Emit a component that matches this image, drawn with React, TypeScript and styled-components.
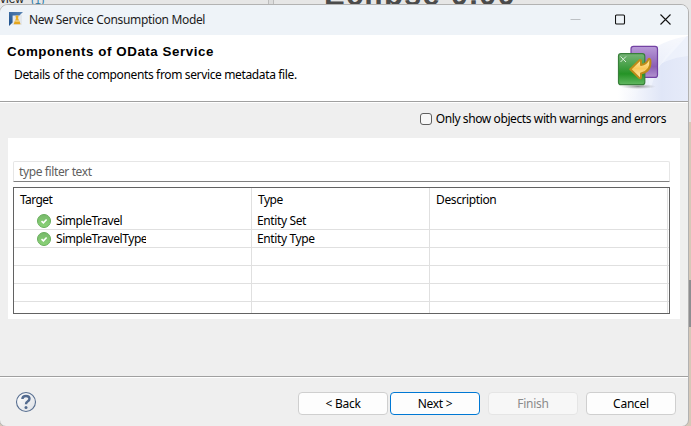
import React from 'react';
import styled, { createGlobalStyle } from 'styled-components';

const Global = createGlobalStyle`
  * { box-sizing: border-box; }
  body { margin: 0; overflow: hidden; font: 12px/16px "Noto Sans", "Open Sans", sans-serif; color: #000; }
`;

const Desktop = styled.div`
  position: relative;
  width: 691px;
  height: 426px;
  padding-top: 4px;
  overflow: hidden;
  background: linear-gradient(#e6e6e6 0 122px, #d6c8b8 122px 280px, #8e8e90 280px 327px, #d6c8b8 327px);
`;

const Behind = styled.div<{ $x: number; $y: number; $size: number; $color: string; $bold?: boolean; $ls?: number }>`
  position: absolute;
  left: ${p => p.$x}px;
  top: ${p => p.$y}px;
  font: ${p => (p.$bold ? 'bold' : 'normal')} ${p => p.$size}px/1 "Liberation Sans", sans-serif;
  letter-spacing: ${p => p.$ls ?? 0}px;
  white-space: pre;
  color: ${p => p.$color};
`;

const Sash = styled.div`
  position: absolute;
  left: 268px;
  top: 0;
  width: 6px;
  height: 5px;
  background: #ddd;
  border: solid #bdbdbd;
  border-width: 0 1px;
`;

const Dialog = styled.section`
  position: relative;
  display: flex;
  flex-direction: column;
  width: 690px;
  height: 423px;
  margin-left: -1px;
  border: 1px solid #b2b2b2;
  border-radius: 9px 8px 7px 7px;
  background: #efefef;
  overflow: hidden;
`;

const Text = styled.span<{ $ls?: number; $color?: string }>`
  white-space: pre;
  letter-spacing: ${p => p.$ls ?? -0.38}px;
  color: ${p => p.$color ?? 'inherit'};
`;

const TitleBar = styled.header`
  display: flex;
  align-items: center;
  flex: 0 0 30px;
  padding: 0 0 2px 9px;
  background: #eef3f8;
`;

const Caption = styled(Text)`
  flex: 1;
  margin: 1px 0 0 6px;
`;

const WindowControls = styled.div`
  display: flex;
  gap: 34px;
  margin-right: 17px;
  svg { display: block; }
`;

const Banner = styled.div`
  display: flex;
  justify-content: space-between;
  flex: 0 0 67px;
  background: #fff;
  border-bottom: 1px solid #a0a0a0;
  box-shadow: 0 1px #fff;
`;

const BannerCopy = styled.div`
  display: flex;
  flex-direction: column;
  padding: 9px 0 0 7px;
`;

const Heading = styled.h1`
  margin: 0;
  font: bold 13.33px/16px "Liberation Sans", Arial, sans-serif;
  letter-spacing: 0.56px;
  white-space: pre;
`;

const Details = styled(Text)`
  margin: 7px 0 0 7px;
`;

const OptionRow = styled.label`
  display: flex;
  align-items: center;
  justify-content: flex-end;
  gap: 4px;
  flex: 0 0 36px;
  padding: 0 22px 3px 0;
`;

const Checkbox = styled.span`
  width: 12px;
  height: 12px;
  border: 1px solid #5f5f5f;
  border-radius: 3px;
  background: #f7f7f7;
`;

const Panel = styled.main`
  flex: 0 0 181px;
  margin: 0 8px;
  padding: 23px 10px 0 5px;
  background: #fff;
`;

const Filter = styled.div`
  display: flex;
  align-items: center;
  height: 21px;
  padding-left: 5px;
  border: 1px solid #e6e6e6;
  border-bottom-color: #808080;
  border-radius: 2px 2px 0 0;
`;

const Table = styled.div`
  height: 127px;
  margin-top: 5px;
  border: 1px solid #626262;
  overflow: hidden;
`;

const Row = styled.div<{ $header?: boolean }>`
  display: grid;
  grid-template-columns: 238px 178px 238px 1px;
  height: ${p => (p.$header ? 24 : 18)}px;
  border-bottom: ${p => (p.$header ? 'none' : '1px solid #e0e0e0')};
`;

const Cell = styled.div<{ $pad: number }>`
  display: flex;
  align-items: center;
  min-width: 0;
  padding-left: ${p => p.$pad}px;
  border-right: 1px solid #e0e0e0;
  overflow: hidden;
`;

const TargetName = styled(Text)`
  width: 90px;
  margin-left: 5px;
  overflow: hidden;
`;

const Footer = styled.footer`
  display: flex;
  align-items: flex-start;
  flex: 1;
  margin-top: 57px;
  padding: 14px 12px 0 15px;
  border-top: 1px solid #a0a0a0;
  box-shadow: inset 0 1px #fff;
`;

const Buttons = styled.div`
  display: flex;
  margin: 1px 0 0 auto;
`;

const Button = styled.button<{ $kind?: 'primary' | 'disabled'; $gap?: number }>`
  width: 90px;
  height: 23px;
  margin: 0 0 0 ${p => p.$gap ?? 0}px;
  padding: 0;
  border: 1px solid ${p => (p.$kind === 'primary' ? '#0078d4' : p.$kind === 'disabled' ? '#e5e5e5' : '#cfcfcf')};
  border-radius: 4px;
  background: ${p => (p.$kind === 'disabled' ? '#f7f7f7' : '#fdfdfd')};
  color: ${p => (p.$kind === 'disabled' ? '#8b8b8b' : '#000')};
  font: inherit;
`;

const AppIcon = () => (
  <svg width="14" height="14" viewBox="0 0 14 14">
    <defs>
      <linearGradient id="frame" x1="0" y1="1" x2="1" y2="0">
        <stop stopColor="#1c4f8c" /><stop offset="1" stopColor="#5c86b5" />
      </linearGradient>
    </defs>
    <path d="M3 3H13V13H3Z" fill="#e3e7ec" />
    <path d="M0 0H14L10.4 3.6H3.6V10.4L0 14Z" fill="url(#frame)" />
    <path d="M7 6a1.5 1.5 0 1 1 2 0L10 8.4H6.2Z" fill="#ecae22" />
    <path d="M5.9 8.7H10.3L11.6 12.3H4.6Z" fill="#e5a51d" />
    <path d="M6.2 9.3H10.3" stroke="#fae5a0" strokeWidth=".7" />
  </svg>
);

const Minimize = () => <svg width="11" height="11"><path d="M.5 5.5H10.5" stroke="#bcc0c4" /></svg>;
const Maximize = () => <svg width="11" height="11"><rect x=".5" y="1" width="9" height="9" rx="1" fill="none" stroke="#111" strokeWidth="1.1" /></svg>;
const Close = () => <svg width="11" height="11"><path d="M.5.5 10.5 10.5M10.5.5.5 10.5" stroke="#111" strokeWidth="1.1" /></svg>;

const BannerArt = () => (
  <svg width="88" height="66" viewBox="600 35 88 66">
    <defs>
      <linearGradient id="haze" x1="0" x2="1">
        <stop offset=".08" stopColor="#fff" /><stop offset=".65" stopColor="#e0e6f7" /><stop offset="1" stopColor="#e6ebf9" />
      </linearGradient>
      <linearGradient id="fade" x1="0" x2="0" y1="0" y2="1">
        <stop stopColor="#fff" /><stop offset="1" stopColor="#fff" stopOpacity="0" />
      </linearGradient>
      <linearGradient id="purple" x1="0" x2="0" y1="0" y2="1">
        <stop stopColor="#b99bd8" /><stop offset=".65" stopColor="#8b5fb5" /><stop offset="1" stopColor="#b393cf" />
      </linearGradient>
      <linearGradient id="green" x1="0" x2="0" y1="0" y2="1">
        <stop stopColor="#77b477" /><stop offset=".65" stopColor="#259326" /><stop offset="1" stopColor="#63b862" />
      </linearGradient>
      <linearGradient id="gold" x1="0" x2="0" y1="0" y2="1">
        <stop stopColor="#fff0b4" /><stop offset=".5" stopColor="#fbc85a" /><stop offset="1" stopColor="#ffedb0" />
      </linearGradient>
      <radialGradient id="shade"><stop stopColor="#777" stopOpacity=".75" /><stop offset="1" stopColor="#999" stopOpacity="0" /></radialGradient>
    </defs>
    <path d="M612 102Q635 44 688 36V102Z" fill="url(#haze)" />
    <path d="M600 35H688L656 70Q640 82 634 102H600Z" fill="url(#fade)" opacity=".7" />
    <path d="M650 90Q662 50 688 36V56Q665 58 648 72Z" fill="#f4f7fd" opacity=".6" />
    <ellipse cx="638" cy="86.5" rx="18" ry="2.6" fill="url(#shade)" />
    <rect x="631" y="46.4" width="26.5" height="31" rx="2.5" fill="url(#purple)" stroke="#7342a3" strokeWidth="1.2" />
    <rect x="618.5" y="53.7" width="26.3" height="31" rx="2.5" fill="url(#green)" stroke="#387f3a" strokeWidth="1.2" />
    <path d="M620.5 56.5 626 62M626 56.5 620.5 62" stroke="#d8efd8" strokeWidth="1" />
    <path d="M630.3 69.2 639.5 60.2Q641.3 59.6 641 62V65Q646.5 64.5 648.5 59.2Q649.7 58 650.3 60Q651.5 71.5 641 73.4V77Q641 79.2 639 77.8Z" fill="url(#gold)" stroke="#bd8b18" strokeWidth="2" strokeLinejoin="round" />
  </svg>
);

const OkIcon = () => (
  <svg width="14" height="14" viewBox="0 0 14 14">
    <defs>
      <linearGradient id="ok" x1="0" x2="0" y1="0" y2="1"><stop stopColor="#78b96b" /><stop offset="1" stopColor="#8ad377" /></linearGradient>
    </defs>
    <circle cx="7" cy="7" r="6.5" fill="url(#ok)" stroke="#68ad5c" strokeWidth="1" />
    <path d="M4.5 7.1 6.4 8.8 9.6 5.5" fill="none" stroke="#fff" strokeWidth="1.6" />
  </svg>
);

const HelpIcon = () => (
  <svg width="22" height="22" viewBox="0 0 22 22">
    <defs>
      <linearGradient id="help" x1="0" x2="1" y1="0" y2="1"><stop stopColor="#fff" /><stop offset="1" stopColor="#dcdfe4" /></linearGradient>
    </defs>
    <circle cx="11" cy="11" r="9.5" fill="url(#help)" stroke="#586f91" strokeWidth="1.1" />
    <path d="M7.4 8Q7.5 5 11 5Q14.5 5 14.5 7.8Q14.5 9.4 12.6 10.5Q11 11.4 11 13.3" fill="none" stroke="#536b8f" strokeWidth="2.4" />
    <circle cx="11" cy="16.4" r="1.5" fill="#536b8f" />
  </svg>
);

const items = [
  { target: 'SimpleTravel', type: 'Entity Set' },
  { target: 'SimpleTravelType', type: 'Entity Type' },
];
const blankRows = [0, 1, 2, 3];

export default function App() {
  return (
    <Desktop>
      <Global />
      <Behind $x={0} $y={-7} $size={12} $color="#222">view</Behind>
      <Behind $x={31} $y={-5} $size={11} $color="#2878a8">(1)</Behind>
      <Sash />
      <Behind $x={324} $y={-21} $size={31} $color="#4b4b4b" $bold $ls={1.2}>Eclipse 0.00</Behind>
      <Dialog>
        <TitleBar>
          <AppIcon />
          <Caption $ls={-0.34} $color="#1c1c1c">New Service Consumption Model</Caption>
          <WindowControls><Minimize /><Maximize /><Close /></WindowControls>
        </TitleBar>
        <Banner>
          <BannerCopy>
            <Heading>Components of OData Service</Heading>
            <Details $ls={-0.36}>Details of the components from service metadata file.</Details>
          </BannerCopy>
          <BannerArt />
        </Banner>
        <OptionRow>
          <Checkbox />
          <Text $ls={-0.4}>Only show objects with warnings and errors</Text>
        </OptionRow>
        <Panel>
          <Filter><Text $color="#606060">type filter text</Text></Filter>
          <Table>
            <Row $header>
              <Cell $pad={6}><Text $ls={-0.6}>Target</Text></Cell>
              <Cell $pad={6}><Text $ls={-0.5}>Type</Text></Cell>
              <Cell $pad={6}><Text>Description</Text></Cell>
              <span />
            </Row>
            {items.map(item => (
              <Row key={item.target}>
                <Cell $pad={23}><OkIcon /><TargetName $ls={-0.45}>{item.target}</TargetName></Cell>
                <Cell $pad={5}><Text>{item.type}</Text></Cell>
                <Cell $pad={5} />
              </Row>
            ))}
            {blankRows.map(row => (
              <Row key={row}><Cell $pad={0} /><Cell $pad={0} /><Cell $pad={0} /></Row>
            ))}
          </Table>
        </Panel>
        <Footer>
          <HelpIcon />
          <Buttons>
            <Button><Text $ls={-0.25}>{'< Back'}</Text></Button>
            <Button $kind="primary" $gap={2}><Text $ls={-0.3}>{'Next >'}</Text></Button>
            <Button $kind="disabled" $gap={8}><Text $ls={-0.25}>Finish</Text></Button>
            <Button $gap={8}><Text $ls={-0.25}>Cancel</Text></Button>
          </Buttons>
        </Footer>
      </Dialog>
    </Desktop>
  );
}
